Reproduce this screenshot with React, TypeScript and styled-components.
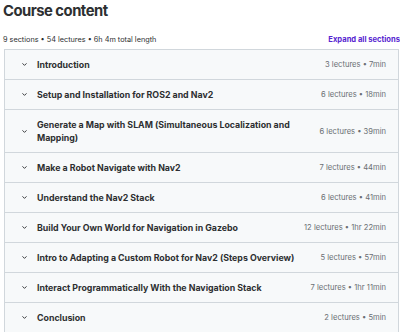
import styled, { createGlobalStyle } from "styled-components";

const GlobalStyle = createGlobalStyle`
  html, body {
    margin: 0;
    padding: 0;
    background: #fff;
  }
  body {
    font-family: Inter, "Noto Sans", sans-serif;
    color: #2d2f31;
  }
`;

const Page = styled.div`
  width: 400px;
  height: 332px;
  overflow: hidden;
  padding-left: 3px;
  box-sizing: border-box;
`;

const Title = styled.h2`
  margin: 0;
  padding-top: 1px;
  font-size: 14.8px;
  line-height: 20px;
  font-weight: 700;
  letter-spacing: -0.5px;
`;

const Summary = styled.div`
  display: flex;
  align-items: center;
  justify-content: space-between;
  margin-top: 10px;
  height: 16px;
  font-size: 7.3px;
  color: #2d2f31;
`;

const ExpandAll = styled.span`
  color: #5624d0;
  font-size: 7.6px;
  font-weight: 700;
  white-space: nowrap;
`;

const Panel = styled.div`
  margin-top: 2px;
  margin-left: 1px;
  width: 395px;
  border: 1px solid #d1d7dc;
  border-bottom: none;
  box-sizing: border-box;
`;

const Row = styled.div`
  display: flex;
  align-items: center;
  min-height: 29px;
  padding: 0 12px 0 16px;
  background: #f7f9fa;
  border-bottom: 1px solid #d1d7dc;
`;

const Chevron = styled.svg`
  flex: none;
  width: 7px;
  height: 7px;
  margin-right: 9px;
`;

const SectionName = styled.div<{ $twoLine?: boolean }>`
  flex: 1;
  font-size: 8.8px;
  font-weight: 700;
  line-height: 13px;
  padding: ${({ $twoLine }) => ($twoLine ? "8px 0" : "0")};
  padding-right: 24px;
`;

const Meta = styled.div`
  flex: none;
  font-size: 7.6px;
  color: #6a6f73;
  white-space: nowrap;
`;

const sections = [
  { name: "Introduction", lectures: 3, length: "7min" },
  { name: "Setup and Installation for ROS2 and Nav2", lectures: 6, length: "18min" },
  {
    name: "Generate a Map with SLAM (Simultaneous Localization and Mapping)",
    lectures: 6,
    length: "39min",
    twoLine: true,
  },
  { name: "Make a Robot Navigate with Nav2", lectures: 7, length: "44min" },
  { name: "Understand the Nav2 Stack", lectures: 6, length: "41min" },
  { name: "Build Your Own World for Navigation in Gazebo", lectures: 12, length: "1hr 22min" },
  { name: "Intro to Adapting a Custom Robot for Nav2 (Steps Overview)", lectures: 5, length: "57min" },
  { name: "Interact Programmatically With the Navigation Stack", lectures: 7, length: "1hr 11min" },
  { name: "Conclusion", lectures: 2, length: "5min" },
];

function App() {
  return (
    <Page>
      <GlobalStyle />
      <Title>Course content</Title>
      <Summary>
        <span>9 sections • 54 lectures • 6h 4m total length</span>
        <ExpandAll>Expand all sections</ExpandAll>
      </Summary>
      <Panel>
        {sections.map((s) => (
          <Row key={s.name}>
            <Chevron viewBox="0 0 12 12">
              <path d="M2.5 4 L6 7.5 L9.5 4" fill="none" stroke="#2d2f31" strokeWidth="1.6" />
            </Chevron>
            <SectionName $twoLine={s.twoLine}>{s.name}</SectionName>
            <Meta>{`${s.lectures} lectures • ${s.length}`}</Meta>
          </Row>
        ))}
      </Panel>
    </Page>
  );
}

export default App;
